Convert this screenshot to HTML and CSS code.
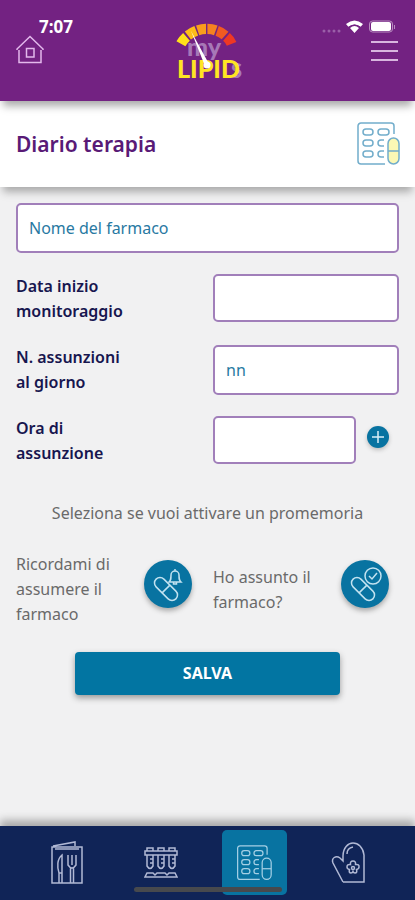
FILE: index.html
```html
<!DOCTYPE html>
<html lang="it">
<head>
<meta charset="utf-8">
<meta name="viewport" content="width=device-width, initial-scale=1">
<title>Diario terapia</title>
<link rel="stylesheet" href="styles.css">
</head>
<body>
<svg class="defs" width="0" height="0" aria-hidden="true">
  <symbol id="blister" viewBox="0 0 44 44">
    <path d="M29 42H5a3 3 0 0 1-3-3V4a3 3 0 0 1 3-3h30a3 3 0 0 1 3 3v8"/>
    <rect x="7" y="7" width="10" height="6" rx="3"/><rect x="22" y="7" width="11" height="6" rx="3"/>
    <rect x="7" y="18" width="10" height="6" rx="3"/><path d="M28 18h-3a3 3 0 0 0 0 6h3"/>
    <rect x="7" y="29" width="10" height="6" rx="3"/><path d="M28 29h-3a3 3 0 0 0 0 6h3"/>
    <rect class="capsule" x="32" y="16" width="11" height="26" rx="5.5"/><path d="M32 29h11"/>
  </symbol>
  <symbol id="pill" viewBox="0 0 48 48">
    <g transform="rotate(45 22 29)"><rect x="8" y="23.500" width="28" height="11" rx="5.500"/><path d="M22 23.500v11"/></g>
  </symbol>
</svg>

<header class="topbar">
  <div class="status">
    <span class="time">7:07</span>
    <svg class="signals" width="76" height="16" viewBox="0 0 76 16" aria-hidden="true">
      <g fill="#9a5fa8"><circle cx="3" cy="11" r="1.500"/><circle cx="8" cy="11" r="1.500"/><circle cx="13" cy="11" r="1.500"/><circle cx="18" cy="11" r="1.500"/></g>
      <path d="M25 4Q33.500-3 42 4L39.500 7Q33.500 2 27.500 7ZM29 8Q33.500 4 38 8L33.500 13Z" fill="#fff"/>
      <path d="M27 7.500Q33.500 2.500 40 7.500" fill="none" stroke="#732282"/>
      <rect x="48.500" y="1" width="23" height="11" rx="3" fill="none" stroke="#b88cc0"/>
      <rect x="50" y="2" width="20" height="9" rx="2" fill="#fff"/><path d="M73.500 5v4" stroke="#b88cc0"/>
    </svg>
  </div>
  <button class="icon-button" type="button" aria-label="Home">
    <svg width="28" height="30" viewBox="0 0 28 30" fill="none" stroke="#e3b9ec" stroke-width="1.500"><path d="M1 15V14L14 1.500 27 14v1M3 15v12.500h22V15"/><rect x="10.500" y="13.500" width="7.500" height="8.500"/></svg>
  </button>
  <svg class="logo" width="72" height="62" viewBox="0 0 72 62" role="img" aria-label="my LIPIDS">
    <g fill="none" stroke-width="11" transform="translate(1 2) scale(.93)">
      <path d="M8.500 23.500Q11 19 14.500 16" stroke="#ffe11b"/>
      <path d="M16 14.500Q20 11.500 25 9.500" stroke="#fdbd18"/>
      <path d="M26.500 9Q31 7.500 35.500 7.500" stroke="#f99d1c"/>
      <path d="M37 7.500Q42 7.500 46 9" stroke="#f58220"/>
      <path d="M47.500 9.500Q52 11 56 14.500" stroke="#f15a22"/>
      <path d="M57.500 16Q61.500 19.500 63 23.500" stroke="#ee3824"/>
    </g>
    <text class="logo-my" x="15" y="36">my</text>
    <text class="logo-s" x="59" y="58">S</text>
    <text class="logo-lipid" x="5" y="58">LIPID</text>
    <path d="M19 11L37 44 33 46Z" fill="#fff"/><circle cx="35" cy="45" r="3.500" fill="#fff"/>
  </svg>
  <button class="icon-button" type="button" aria-label="Menu">
    <svg width="28" height="30" viewBox="0 0 28 30" stroke="#d8b5df" stroke-width="2"><path d="M0 7h27M0 16h27M0 25h27"/></svg>
  </button>
</header>

<section class="heading">
  <h1>Diario terapia</h1>
  <svg class="blister-color" width="44" height="44" aria-hidden="true"><use href="#blister"/></svg>
</section>

<main>
  <form>
    <input class="field" type="text" aria-label="Nome del farmaco" placeholder="Nome del farmaco">
    <div class="row">
      <label for="start">Data inizio monitoraggio</label>
      <input class="field short" id="start" type="text">
    </div>
    <div class="row">
      <label for="count">N. assunzioni<br>al giorno</label>
      <input class="field" id="count" type="text" placeholder="nn">
    </div>
    <div class="row">
      <label for="hour">Ora di assunzione</label>
      <div class="hour">
        <input class="field short" id="hour" type="text">
        <button class="add" type="button" aria-label="Aggiungi ora"><svg width="22" height="22" viewBox="0 0 22 22" stroke="#d9eef7" stroke-width="1.500"><path d="M11 5v12M5 11h12"/></svg></button>
      </div>
    </div>
    <p class="hint">Seleziona se vuoi attivare un promemoria</p>
    <div class="reminders">
      <div class="reminder">
        <span id="remind">Ricordami di assumere il farmaco</span>
        <button class="round" type="button" aria-labelledby="remind">
          <svg width="48" height="48" viewBox="0 0 48 48"><use href="#pill"/><path d="M25 22h12c-2-2-2-3-2-7a4 4 0 0 0-8 0c0 4 0 5-2 7ZM29.500 22v2h3v-2M31 11V9"/></svg>
        </button>
      </div>
      <div class="reminder">
        <span id="taken">Ho assunto il farmaco?</span>
        <button class="round" type="button" aria-labelledby="taken">
          <svg width="48" height="48" viewBox="0 0 48 48"><use href="#pill"/><circle cx="32" cy="16" r="8"/><path d="M28 16l3 3 5-6"/></svg>
        </button>
      </div>
    </div>
    <button class="save" type="submit">SALVA</button>
  </form>
</main>

<nav class="tabs" aria-label="Sezioni">
  <a class="tab" href="#dieta" aria-label="Dieta">
    <svg width="34" height="44" viewBox="0 0 34 44"><path d="M2 6h30v36H2ZM3 5l22-4v4M5 8h24"/><path d="M12 14c-5 4-5 12-3 18h3ZM9 32v10M12 32v10M18 14v10q4 6 8 0V14M22 14v10M20.500 27v15M23.500 27v15"/></svg>
  </a>
  <a class="tab" href="#esami" aria-label="Esami">
    <svg width="34" height="32" viewBox="0 0 34 32"><path d="M3 4V1h6v3M14 4V1h6v3M25 4V1h6v3M1 4h32v4H1ZM3 8v11q3 5 6 0V8M14 8v11q3 5 6 0V8M25 8v11q3 5 6 0V8M6 12h3M6 16h3M17 12h3M17 16h3M28 12h3M28 16h3"/><path d="M3 26h6l2 2 2-2h8l2 2 2-2h6l2 4H1Z"/></svg>
  </a>
  <a class="tab active" href="#terapia" aria-label="Terapia" aria-current="page">
    <svg width="36" height="36" viewBox="0 0 44 44"><use href="#blister"/></svg>
  </a>
  <a class="tab" href="#consigli" aria-label="Consigli">
    <svg width="36" height="42" viewBox="0 0 36 42"><path d="M13 40h21V13C33 5 28 1 23 1S13 6 13 14v5l-3-3c-4-3-9 0-7 5l10 19M17 12q0-6 6-7"/><path d="M23 19q3 0 2.500 3.500 4-.500 3.500 2.500 0 2-2.500 2.500 1 3.500-1.500 3.500-1.500 0-2-1.500-.500 1.500-2 1.500-2.500 0-1.500-3.500-2.500-.500-2.500-2.500 0-3 3.500-2.500Q20 19 23 19Z"/><circle cx="23" cy="26" r="1.500"/></svg>
  </a>
  <span class="home-indicator"></span>
</nav>
</body>
</html>
```
FILE: styles.css
```css
* { box-sizing: border-box; }

body {
  margin: 0;
  min-height: 100vh;
  display: flex;
  flex-direction: column;
  background: #f1f1f2;
  color: #6a6a6a;
  font: 16px/25px "Noto Sans", sans-serif;
}

.defs { position: absolute; }

button { border: 0; padding: 0; font: inherit; cursor: pointer; }
input { font: inherit; }
svg { display: block; }

.topbar {
  position: relative;
  display: flex;
  justify-content: space-between;
  align-items: flex-start;
  padding: 20px 16px 16px;
  min-height: 101px;
  background: #732282;
  box-shadow: 0 8px 8px -3px #aaa;
  z-index: 2;
}

.status {
  position: absolute;
  inset: 16px 18px auto 39px;
  display: flex;
  justify-content: space-between;
  align-items: flex-start;
  pointer-events: none;
}

.time { color: #fff; font-size: 17px; line-height: 22px; font-weight: 700; }
.signals { margin-top: 4px; }
.icon-button { margin-top: 15px; background: none; }
.logo { overflow: visible; }
.logo text { font-family: Lato, sans-serif; font-weight: 900; }
.logo-my { font-size: 25px; fill: #a778b7; }
.logo-s { font-size: 20px; fill: #a778b7; }
.logo-lipid { font-size: 25px; fill: #ffe423; }

.heading {
  position: relative;
  display: flex;
  justify-content: space-between;
  align-items: center;
  padding: 0 15px 0 16px;
  min-height: 86px;
  background: #fff;
  box-shadow: 0 8px 8px -3px #aaa;
  z-index: 1;
}

h1 {
  margin: 0;
  color: #591a76;
  font-size: 21px;
  line-height: 30px;
  font-weight: 600;
}

.blister-color { fill: none; stroke: #72adcb; stroke-width: 1.5; --capsule: #fbf8b5; }
.capsule { fill: var(--capsule, none); }

main { flex: 1; padding: 16px; }
form { display: flex; flex-direction: column; gap: 21px; }

.field {
  width: 100%;
  min-width: 0;
  height: 50px;
  padding: 0 11px;
  border: 2px solid #a17fba;
  border-radius: 5px;
  background: #fff;
  color: #176c98;
  outline: 0;
}
.field.short { height: 48px; }
.field::placeholder { color: #2879a2; opacity: 1; }

.row { display: grid; grid-template-columns: 1fr 1fr; gap: 11px; min-height: 50px; }
.row label { max-width: 130px; color: #17164f; font-weight: 600; }
.hour { display: grid; grid-template-columns: 1fr 43px; align-items: start; }
.add {
  justify-self: center;
  margin-top: 10px;
  border-radius: 50%;
  background: #0873a1;
  box-shadow: 0 2px 4px #bbb;
}

.hint { margin: 14px 0 0; text-align: center; }

.reminders { display: grid; grid-template-columns: 1fr 1fr; gap: 11px; margin-top: 5px; }
.reminder { display: flex; align-items: center; justify-content: space-between; padding-right: 10px; }
.reminder span { max-width: 110px; }
.round {
  flex: none;
  align-self: flex-start;
  margin-top: 8px;
  border-radius: 50%;
  background: #0873a1;
  box-shadow: 0 3px 5px #aaa;
}
.round svg { fill: none; stroke: #c2e2f0; stroke-width: 1.5; }

.save {
  align-self: center;
  width: 69%;
  height: 43px;
  margin-top: 4px;
  border-radius: 4px;
  background: #0275a2;
  color: #fff;
  font-weight: 700;
  box-shadow: 0 3px 6px #999;
}

.tabs {
  position: relative;
  display: flex;
  padding: 4px 20px 5px;
  background: #102457;
  box-shadow: 0 -6px 8px #aaa;
}
.tab {
  flex: 1;
  display: grid;
  place-items: center;
  height: 65px;
  margin: 0 14px;
  border-radius: 5px;
}
.tab svg { fill: none; stroke: #b1b9d5; stroke-width: 1.5; }
.tab.active { background: #0873a1; }
.tab.active svg { stroke: #a5d0e5; }

.home-indicator {
  position: absolute;
  left: 50%;
  bottom: 8px;
  width: 148px;
  height: 5px;
  transform: translateX(-50%);
  border-radius: 3px;
  background: #47494d;
}
```
